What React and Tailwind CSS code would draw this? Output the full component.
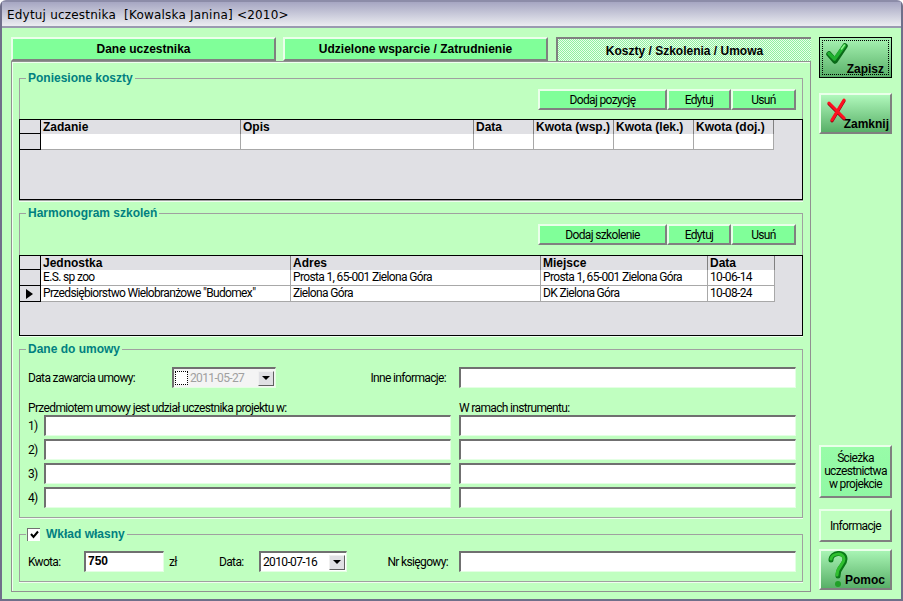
import React from 'react';

const BOLD = "font-['Liberation_Sans'] font-bold text-[12px] tracking-normal";

const Tab = ({ w, ml, children }) => (
  <div className={`${w} ${ml} h-[24px] bg-[#80ff99] border-t-2 border-l-2 border-t-[#eaffea] border-l-[#eaffea] border-r-2 border-b-2 border-r-[#808080] border-b-[#808080] flex items-center justify-center ${BOLD}`}>
    {children}
  </div>
);

const MiniBtn = ({ w, children }) => (
  <div className={`${w} h-[21px] bg-[#80ff99] border-2 border-t-[#eaffea] border-l-[#eaffea] border-r-[#808080] border-b-[#808080] flex items-center justify-center`}>
    {children}
  </div>
);

const DataGrid = ({ cols, widths, rows, active }) => (
  <div className="h-[81px] border border-black bg-[#e0e0e4] overflow-hidden">
    <div className="flex h-[14px]">
      <div className="w-[21px] border-r border-b border-r-black border-b-black" />
      {cols.map((c, i) => (
        <div key={c} style={{ width: widths[i] }} className={`border-r border-r-[#808080] pl-[2px] leading-[14px] whitespace-nowrap ${BOLD}`}>
          {c}
        </div>
      ))}
    </div>
    {rows.map((r, ri) => (
      <div key={ri} className="flex h-[16px]">
        <div className="w-[21px] border-r border-b border-r-black border-b-black flex items-center pl-[6px]">
          {active === ri && <div className="w-0 h-0 border-y-[5px] border-y-transparent border-l-[7px] border-l-black" />}
        </div>
        {r.map((c, i) => (
          <div key={i} style={{ width: widths[i] }} className="bg-white border-r border-b border-[#a8a8a8] pl-[2px] leading-[14px] whitespace-nowrap overflow-hidden">
            {c}
          </div>
        ))}
      </div>
    ))}
  </div>
);

const Field = ({ w, children }) => (
  <div className={`${w} h-[21px] bg-white border-t-2 border-l-2 border-t-[#707070] border-l-[#707070] border-r border-b border-r-[#e4ffe4] border-b-[#e4ffe4] shrink-0 pl-[2px] leading-[16px]`}>
    {children}
  </div>
);

const ComboArrow = () => (
  <div className="w-[16px] h-[15px] mr-[1px] bg-[#e0e0e4] border border-t-[#f0f0f0] border-l-[#f0f0f0] border-r-[#606060] border-b-[#606060] flex items-center justify-center">
    <div className="w-0 h-0 border-x-[4px] border-x-transparent border-t-[4px] border-t-black" />
  </div>
);

const Group = ({ legend, className, children }) => (
  <fieldset className={`mx-[7px] border border-[#a0a0a0] shadow-[0_1px_0_#f0fff0] ${className}`}>
    <legend className={`ml-[6px] px-[2px] h-[14px] leading-[14px] text-[#008080] ${BOLD}`}>{legend}</legend>
    {children}
  </fieldset>
);

const NumRow = ({ n }) => (
  <div className="flex items-center h-[21px] mb-[3px]">
    <span className="w-[16px] ml-[8px]">{n})</span>
    <Field w="w-[407px]" />
    <div className="w-[8px]" />
    <Field w="w-[337px]" />
  </div>
);

const CheckIcon = () => (
  <svg width="22" height="22" viewBox="0 0 22 22">
    <path d="M3 11 L9 18 L19 3" fill="none" stroke="#0a6a18" strokeWidth="5.500" strokeLinecap="round" strokeLinejoin="round" />
    <path d="M3 10.500 L8.500 16 L18.500 2.500" fill="none" stroke="#20b030" strokeWidth="3.500" strokeLinecap="round" strokeLinejoin="round" />
    <path d="M15.500 6 L18.500 2" fill="none" stroke="#90f090" strokeWidth="1.500" strokeLinecap="round" />
  </svg>
);

const CrossIcon = () => (
  <svg width="20" height="25" viewBox="0 0 20 25">
    <path d="M2 6 L17 21" stroke="#800010" strokeWidth="3" strokeLinecap="round" />
    <path d="M17 3 L5 23" stroke="#900010" strokeWidth="3" strokeLinecap="round" />
    <path d="M2 5 L17 20 M17 2 L5 22" stroke="#ff1020" strokeWidth="3" strokeLinecap="round" fill="none" />
  </svg>
);

const HelpIcon = () => (
  <svg width="20" height="37" viewBox="0 0 20 37">
    <path d="M3 9 C3 1 17 0 17 8 C17 15 10 15 10 25" fill="none" stroke="#0a7a18" strokeWidth="5" strokeLinecap="round" />
    <path d="M3 8 C4 2 16 1 16 8 C16 14 9 15 9 24" fill="none" stroke="#30c030" strokeWidth="3" strokeLinecap="round" />
    <circle cx="10" cy="33" r="3" fill="#20a028" />
  </svg>
);

const App = () => {
  return (
    <div className="w-[903px] h-[601px] bg-white overflow-hidden">
      <div className="w-[903px] h-[601px] flex flex-col bg-[#c0ffc0] rounded-t-[6px] border-2 border-[#6f6f8a] border-t-[#8c8ca8] font-['Roboto',sans-serif] text-[12px] tracking-[-0.65px] text-black">
        {/* Title */}
        <div className="h-[26px] shrink-0 bg-gradient-to-b from-[#a6a6c2] to-[#ecedf1] border-b-2 border-b-[#9a9ab0] flex items-center pl-[5px] pt-[1px] font-['DejaVu_Sans'] text-[12px] tracking-[0.2px] whitespace-pre">
          Edytuj uczestnika  [Kowalska Janina] {'<2010>'}
        </div>

        <div className="flex-1 flex pt-[9px]">
          {/* Main column */}
          <div className="w-[800px] ml-[9px] flex flex-col">
            <div className="flex h-[24px]">
              <Tab w="w-[265px]">Dane uczestnika</Tab>
              <Tab w="w-[265px]" ml="ml-[7px]">Udzielone wsparcie / Zatrudnienie</Tab>
              <div className={`w-[255px] ml-[8px] h-[24px] pt-[2px] border-t-2 border-l-2 border-t-[#808080] border-l-[#808080] bg-[repeating-conic-gradient(#90f0a0_0_25%,#eaffea_0_50%)] bg-[length:2px_2px] flex items-center justify-center ${BOLD}`}>
                Koszty / Szkolenia / Umowa
              </div>
            </div>

            <div className="h-[531px] border border-[#909090] shadow-[inset_1px_1px_0_#f0fff0] flex flex-col">
              <Group legend="Poniesione koszty" className="mt-[9px] h-[130px]">
                <div className="flex justify-end pr-[6px] mt-[4px] mb-[9px]">
                  <MiniBtn w="w-[129px]">Dodaj pozycję</MiniBtn>
                  <MiniBtn w="w-[64px]">Edytuj</MiniBtn>
                  <MiniBtn w="w-[65px]">Usuń</MiniBtn>
                </div>
                <div className="-mx-px">
                  <DataGrid
                    cols={['Zadanie', 'Opis', 'Data', 'Kwota (wsp.)', 'Kwota (lek.)', 'Kwota (doj.)']}
                    widths={[200, 233, 60, 80, 80, 80]}
                    rows={[['', '', '', '', '', '']]}
                  />
                </div>
              </Group>

              <Group legend="Harmonogram szkoleń" className="mt-[5px] h-[130px]">
                <div className="flex justify-end pr-[6px] mt-[4px] mb-[10px]">
                  <MiniBtn w="w-[129px]">Dodaj szkolenie</MiniBtn>
                  <MiniBtn w="w-[64px]">Edytuj</MiniBtn>
                  <MiniBtn w="w-[65px]">Usuń</MiniBtn>
                </div>
                <div className="-mx-px">
                  <DataGrid
                    cols={['Jednostka', 'Adres', 'Miejsce', 'Data']}
                    widths={[250, 250, 167, 67]}
                    rows={[
                      ['E.S. sp zoo', 'Prosta 1, 65-001 Zielona Góra', 'Prosta 1, 65-001 Zielona Góra', '10-06-14'],
                      ['Przedsiębiorstwo Wielobranżowe "Budomex"', 'Zielona Góra', 'DK Zielona Góra', '10-08-24'],
                    ]}
                    active={1}
                  />
                </div>
              </Group>

              <Group legend="Dane do umowy" className="mt-[6px] h-[176px]">
                <div className="flex items-center h-[21px] mt-[11px]">
                  <span className="ml-[8px] w-[144px]">Data zawarcia umowy:</span>
                  <div className="w-[104px] h-[21px] bg-[#f4f4f4] border-t-2 border-l-2 border-t-[#707070] border-l-[#707070] border-r border-b border-r-[#e4ffe4] border-b-[#e4ffe4] flex items-center">
                    <div className="w-[13px] h-[14px] ml-[1px] bg-white border border-dotted border-black" />
                    <span className="flex-1 pl-[2px] text-[#a0a0a0]">2011-05-27</span>
                    <ComboArrow />
                  </div>
                  <span className="w-[183px] text-right pr-[13px]">Inne informacje:</span>
                  <Field w="w-[337px]" />
                </div>
                <div className="flex h-[15px] mt-[12px] items-center">
                  <span className="ml-[8px] w-[431px]">Przedmiotem umowy jest udział uczestnika projektu w:</span>
                  <span>W ramach instrumentu:</span>
                </div>
                <NumRow n={1} />
                <NumRow n={2} />
                <NumRow n={3} />
                <NumRow n={4} />
              </Group>

              <Group
                legend={
                  <span className="flex items-center gap-[6px] -ml-px">
                    <span className="w-[13px] h-[13px] bg-white border-t border-l border-[#707070] flex items-center justify-center">
                      <svg width="9" height="9" viewBox="0 0 9 9"><path d="M1 4 L3.500 7 L8 1.500" fill="none" stroke="black" strokeWidth="2" /></svg>
                    </span>
                    Wkład własny
                  </span>
                }
                className="mt-[9px] h-[55px]"
              >
                <div className="flex items-center h-[21px] mt-[10px]">
                  <span className="ml-[8px] w-[56px]">Kwota:</span>
                  <Field w="w-[80px]"><span className={BOLD}>750</span></Field>
                  <span className="ml-[5px] w-[50px]">zł</span>
                  <span className="w-[40px]">Data:</span>
                  <div className="w-[88px] h-[21px] bg-white border-t-2 border-l-2 border-t-[#707070] border-l-[#707070] border-r border-b border-r-[#e4ffe4] border-b-[#e4ffe4] flex items-center">
                    <span className="flex-1 pl-[2px]">2010-07-16</span>
                    <ComboArrow />
                  </div>
                  <span className="w-[112px] text-right pr-[11px]">Nr księgowy:</span>
                  <Field w="w-[337px]" />
                </div>
              </Group>
            </div>
          </div>

          {/* Right column */}
          <div className="w-[73px] ml-[8px] flex flex-col">
            <div className="h-[41px] border border-black bg-gradient-to-b from-[#a8f4b4] to-[#58b068] p-[2px]">
              <div className="h-full border border-dotted border-black flex justify-between items-end pl-[3px] pr-[4px]">
                <div className="mb-[9px]"><CheckIcon /></div>
                <span className={`leading-[14px] -mb-[2px] -ml-[3px] ${BOLD}`}>Zapisz</span>
              </div>
            </div>
            <div className="h-[41px] mt-[15px] border-2 border-t-[#eaffea] border-l-[#eaffea] border-r-[#808080] border-b-[#808080] bg-gradient-to-b from-[#b0f8bc] to-[#58b068] flex justify-between items-end relative">
              <div className="absolute left-[6px] top-[3px]"><CrossIcon /></div>
              <span className={`ml-auto mr-[1px] leading-[15px] ${BOLD}`}>Zamknij</span>
            </div>
            <div className="h-[53px] mt-[311px] border-2 border-t-[#eaffea] border-l-[#eaffea] border-r-[#808080] border-b-[#808080] bg-gradient-to-b from-[#98fca8] to-[#90f8a4] flex items-center justify-center text-center leading-[13px]">
              Ścieżka uczestnictwa w projekcie
            </div>
            <div className="h-[33px] mt-[11px] border-2 border-t-[#eaffea] border-l-[#eaffea] border-r-[#808080] border-b-[#808080] flex items-center justify-center">
              Informacje
            </div>
            <div className="h-[41px] mt-[7px] border-2 border-t-[#eaffea] border-l-[#eaffea] border-r-[#808080] border-b-[#808080] bg-gradient-to-b from-[#a8f4b4] to-[#58b068] flex justify-between items-end relative">
              <div className="absolute left-[7px] top-[0px]"><HelpIcon /></div>
              <span className={`ml-auto mr-[5px] leading-[15px] ${BOLD}`}>Pomoc</span>
            </div>
          </div>
        </div>
      </div>
    </div>
  );
};

export default App;
